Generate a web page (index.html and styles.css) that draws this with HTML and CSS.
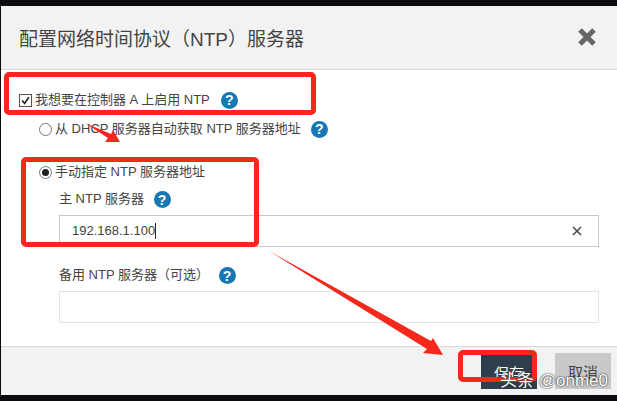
FILE: index.html
```html
<!DOCTYPE html>
<html lang="zh-CN">
<head>
<meta charset="UTF-8">
<meta name="viewport" content="width=device-width, initial-scale=1.0">
<title>配置网络时间协议（NTP）服务器</title>
<link rel="stylesheet" href="styles.css">
</head>
<body>
	<div class="dialog">
		<header class="dialog-head">
			<h1>配置网络时间协议（NTP）服务器</h1>
			<svg class="close" width="20" height="20" viewBox="0 0 20 20"><path d="M3 3 L17 17 M17 3 L3 17" stroke="#666" stroke-width="5"/></svg>
		</header>

		<div class="dialog-body">
			<div class="row row-enable">
				<span class="check"><svg width="13" height="13" viewBox="0 0 13 13"><path d="M2.5 6.5 L5.5 10 L10.5 2.5" fill="none" stroke="#222" stroke-width="2"/></svg></span>
				<label>我想要在控制器 A 上启用 NTP</label>
				<span class="help help-enable">?</span>
			</div>

			<div class="row row-dhcp">
				<span class="radio"></span>
				<label>从 DHCP 服务器自动获取 NTP 服务器地址</label>
				<span class="help">?</span>
			</div>

			<div class="row row-manual">
				<span class="radio radio-on"></span>
				<label>手动指定 NTP 服务器地址</label>
			</div>

			<div class="field">
				<div class="field-label">主 NTP 服务器 <span class="help">?</span></div>
				<div class="input input-active">
					<span class="value">192.168.1.100</span>
					<svg width="10" height="10" viewBox="0 0 10 10"><path d="M1 1 L9 9 M9 1 L1 9" stroke="#444" stroke-width="1.5"/></svg>
				</div>
			</div>

			<div class="field field-backup">
				<div class="field-label">备用 NTP 服务器（可选） <span class="help">?</span></div>
				<div class="input"></div>
			</div>
		</div>

		<footer class="dialog-foot">
			<button class="btn btn-save">保存</button>
			<button class="btn btn-cancel">取消</button>
		</footer>
	</div>

	<!-- red annotations drawn over the screenshot -->
	<div class="mark mark-enable"></div>
	<div class="mark mark-manual"></div>
	<div class="mark mark-save"></div>
	<svg class="arrows" width="617" height="401" viewBox="0 0 617 401">
		<polygon points="85,123 111,134 113,130 120,142 105,142 108,138" fill="#f5281c"/>
		<polygon points="269,251 431,341 433,338 443,355 423,353 427,349" fill="#f5281c"/>
	</svg>
	<div class="watermark">头条 @onme0</div>
</body>
</html>
```

FILE: styles.css
```css
html, body {
    margin: 0;
    padding: 0;
    height: 100%;
}

body {
    background-color: #0c0c10;
    color: #444;
    font-family: "Liberation Sans", "Noto Sans CJK SC", sans-serif;
    font-size: 13px;
    overflow: hidden;
    position: relative;
}

.dialog {
    background-color: #fff;
    margin: 6px 0 0 1px;
    height: 389px;
    display: flex;
    flex-direction: column;
}

.dialog-head {
    background-color: #f2f2f2;
    border-bottom: 1px solid #d8d8d8;
    height: 63px;
    flex: none;
    display: flex;
    align-items: center;
    justify-content: space-between;
    padding: 0 20px 0 18px;
}

.dialog-head h1 {
    font-size: 19px;
    font-weight: normal;
    margin: 0;
}

.close {
    margin-top: -1px;
}

.dialog-body {
    flex: 1;
    padding: 0 18px 0 18px;
}

.row {
    display: flex;
    align-items: center;
    height: 20px;
}

.row label {
    line-height: 20px;
}

.row-enable {
    margin-top: 20px;
}

.row-dhcp {
    margin-top: 9px;
    padding-left: 20px;
}

.row-manual {
    margin-top: 23px;
    padding-left: 20px;
}

.check {
    width: 11px;
    height: 11px;
    border: 1px solid #555;
    background-color: #fff;
    margin-right: 3px;
    display: flex;
    align-items: center;
    justify-content: center;
}

.radio {
    width: 11px;
    height: 11px;
    border: 1px solid #777;
    border-radius: 50%;
    background-color: #fff;
    margin-right: 3px;
    display: flex;
    align-items: center;
    justify-content: center;
}

.radio-on::after {
    content: "";
    width: 7px;
    height: 7px;
    border-radius: 50%;
    background-color: #222;
}

.help {
    display: inline-flex;
    align-items: center;
    justify-content: center;
    width: 17px;
    height: 17px;
    border-radius: 50%;
    background-color: #1578b4;
    color: #fff;
    font-size: 14px;
    font-weight: bold;
    margin-left: 10px;
    vertical-align: middle;
}

.help-enable {
    margin-left: 11px;
}

.field {
    margin: 7px 0 0 40px;
    width: 540px;
}

.field-label {
    height: 20px;
    line-height: 20px;
    margin-bottom: 6px;
}

.field-label .help {
    margin-left: 6px;
}

.field-backup {
    margin-top: 18px;
}

.input {
    height: 30px;
    border: 1px solid #e2e2e2;
    background-color: #fff;
    display: flex;
    align-items: center;
    justify-content: space-between;
    padding: 0 16px 0 12px;
    box-sizing: content-box;
    width: 510px;
}

.input-active {
    border-color: #c8c8c8;
}

.value {
    border-right: 1px solid #222;
    line-height: 16px;
}

.dialog-foot {
    background-color: #f2f2f2;
    border-top: 1px solid #d8d8d8;
    height: 42px;
    flex: none;
    display: flex;
    justify-content: flex-end;
    align-items: flex-end;
    gap: 18px;
    padding: 0 6px 6px 0;
}

.btn {
    border: none;
    width: 56px;
    font-family: inherit;
    font-size: 15px;
    padding: 0;
}

.btn-save {
    background-color: #2f3e4c;
    color: #fff;
    height: 34px;
}

.btn-cancel {
    background-color: #c9c9c9;
    color: #444;
    height: 36px;
}

.mark {
    position: absolute;
    border: 5px solid #f5281c;
    border-radius: 5px;
    box-sizing: border-box;
}

.mark-enable {
    left: 4px;
    top: 72px;
    width: 312px;
    height: 43px;
}

.mark-manual {
    left: 21px;
    top: 157px;
    width: 238px;
    height: 90px;
}

.mark-save {
    left: 458px;
    top: 350px;
    width: 79px;
    height: 32px;
}

.arrows {
    position: absolute;
    left: 0;
    top: 0;
}

.watermark {
    position: absolute;
    left: 500px;
    top: 366px;
    color: #fff;
    font-size: 17px;
    white-space: nowrap;
    text-shadow: 0 0 2px #333, 0 0 1px #333;
}
```
